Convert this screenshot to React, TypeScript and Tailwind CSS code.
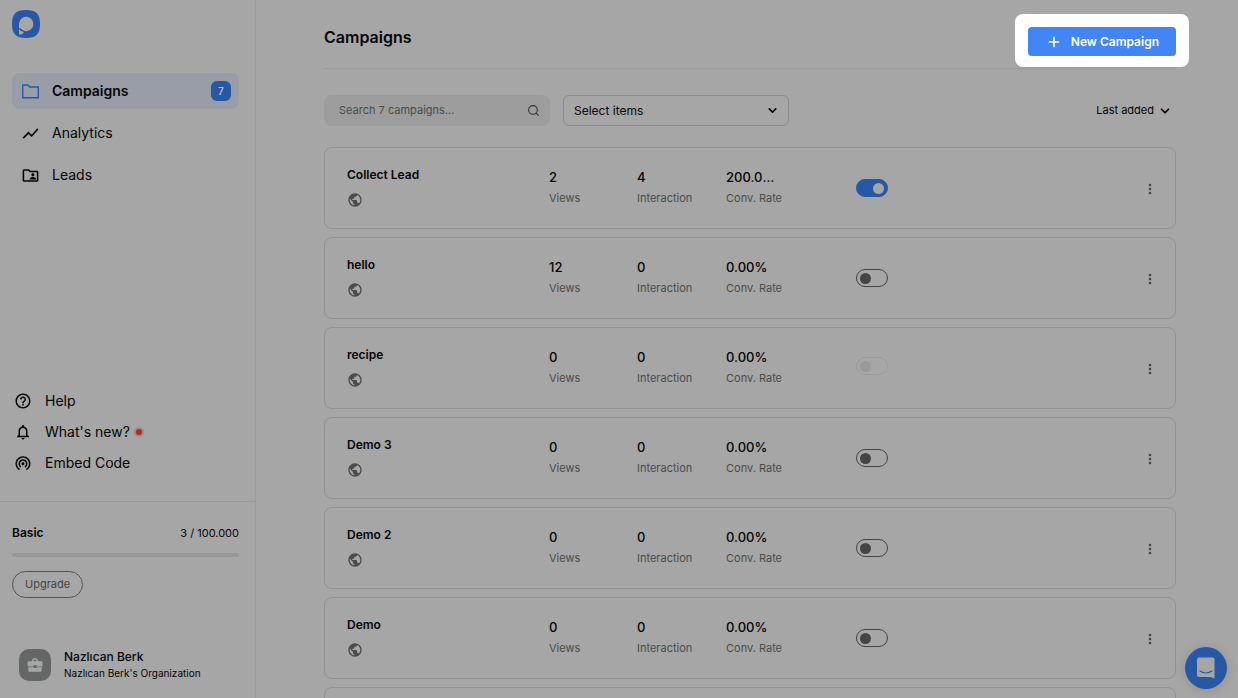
import { clsx } from 'clsx';
import { FiChevronDown, FiSearch } from 'react-icons/fi';
import {
  MdAdd,
  MdBusinessCenter,
  MdHelpOutline,
  MdMoreVert,
  MdNotificationsNone,
  MdOutlineFolderShared,
  MdPublic,
  MdShowChart,
  MdWifiTethering,
} from 'react-icons/md';

type Campaign = {
  name: string;
  views: string;
  interaction: string;
  rate: string;
  active?: boolean;
  disabled?: boolean;
};

const campaigns: Campaign[] = [
  { name: 'Collect Lead', views: '2', interaction: '4', rate: '200.00%', active: true },
  { name: 'hello', views: '12', interaction: '0', rate: '0.00%' },
  { name: 'recipe', views: '0', interaction: '0', rate: '0.00%', disabled: true },
  { name: 'Demo 3', views: '0', interaction: '0', rate: '0.00%' },
  { name: 'Demo 2', views: '0', interaction: '0', rate: '0.00%' },
  { name: 'Demo', views: '0', interaction: '0', rate: '0.00%' },
  { name: 'Demo 1', views: '0', interaction: '0', rate: '0.00%' },
];

function Logo() {
  return (
    <svg viewBox="0 0 28 28" className="size-7" aria-label="Home">
      <path d="M14 0C24 0 28 4 28 14S24 28 14 28 0 24 0 14 4 0 14 0Z" fill="#2857a3" />
      <path d="M7 14a7.200 7.200 0 1 1 7.200 7.200c-1.800 0-3.500-.8-5.200-2.400L7 18Z" fill="#a6a6a6" />
      <path d="M7 19.200c1.400 1.300 2.900 2.200 4.700 2.700-.1 1.500-1.200 2.500-2.600 2.500H7Z" fill="#a6a6a6" />
    </svg>
  );
}

function FolderIcon() {
  return (
    <svg viewBox="0 0 19 19" className="size-[19px] text-[#2857a3]" fill="none" stroke="currentColor" strokeWidth="1.400">
      <path d="M1.700 3h5.200l2 2h8.400v10.800H1.700Z" strokeLinejoin="round" />
    </svg>
  );
}

function Sidebar() {
  return (
    <aside className="flex h-full w-64 shrink-0 flex-col border-r border-[#9c9c9c]">
      <div className="px-3 pt-[10px]">
        <Logo />
      </div>

      {/* Main navigation */}
      <nav className="mt-[35px] flex flex-col gap-[6px] pr-4 pl-3 text-sm">
        <a href="#campaigns" className="flex h-9 items-center gap-3 rounded-lg bg-[#989da6] pr-2 pl-[9px] font-semibold">
          <FolderIcon />
          <span className="flex-1">Campaigns</span>
          <span className="flex size-5 items-center justify-center rounded-md bg-[#2857a3] text-[10px] text-[#b5bfd0]">7</span>
        </a>
        <a href="#analytics" className="flex h-9 items-center gap-3 pl-[9px]">
          <MdShowChart className="size-[19px]" />
          Analytics
        </a>
        <a href="#leads" className="flex h-9 items-center gap-3 pl-[9px]">
          <MdOutlineFolderShared className="size-[19px]" />
          Leads
        </a>
      </nav>

      {/* Secondary links */}
      <nav className="mt-auto flex flex-col gap-[11px] pb-7 pl-[14px] text-sm">
        <a href="#help" className="flex items-center gap-[13px]">
          <MdHelpOutline className="size-[18px]" />
          Help
        </a>
        <a href="#news" className="flex items-center gap-[13px]">
          <MdNotificationsNone className="size-[18px]" />
          <span className="flex items-center gap-1">
            What&apos;s new?
            <span className="flex size-[10px] items-center justify-center rounded-full bg-[#b08381]">
              <span className="size-[6px] rounded-full bg-[#a32f2c]" />
            </span>
          </span>
        </a>
        <a href="#embed" className="flex items-center gap-[13px]">
          <MdWifiTethering className="size-[18px]" />
          Embed Code
        </a>
      </nav>

      {/* Plan usage */}
      <section className="border-t border-[#999] pt-[22px] pr-4 pl-3">
        <div className="flex items-center justify-between">
          <h2 className="text-xs leading-[18px] font-semibold">Basic</h2>
          <span className="text-[11px] leading-[18px]">3 / 100.000</span>
        </div>
        <div className="mt-[11px] h-1 rounded-full bg-[#979797]" />
        <button className="mt-[14px] h-[27px] rounded-full border border-[#555] px-3 text-[11px] text-[#444]">Upgrade</button>
      </section>

      {/* Account */}
      <div className="mt-[50px] flex items-center gap-[13px] pb-4 pl-[19px]">
        <span className="flex size-8 items-center justify-center rounded-[10px] bg-[#646766]">
          <MdBusinessCenter className="size-[18px] text-[#a6a6a6]" />
        </span>
        <div>
          <p className="text-xs leading-[17px] font-medium">Nazlıcan Berk</p>
          <p className="text-[10px] leading-[17px]">Nazlıcan Berk&apos;s Organization</p>
        </div>
      </div>
    </aside>
  );
}

function Stat({ value, label }: { value: string; label: string }) {
  return (
    <div className="pb-1">
      <p className="w-[52px] truncate text-[13px] leading-5 font-medium">{value}</p>
      <p className="mt-[3px] text-[11px] leading-4 text-[#4b4b4b]">{label}</p>
    </div>
  );
}

function CampaignCard({ campaign }: { campaign: Campaign }) {
  const { name, views, interaction, rate, active, disabled } = campaign;

  return (
    <li className="grid h-[82px] shrink-0 grid-cols-[202px_88px_89px_130px_1fr_auto] items-center rounded-lg border border-[#929292] pr-[17px] pl-[22px]">
      <div className="pb-[2px]">
        <h3 className="text-xs leading-4 font-semibold">{name}</h3>
        <MdPublic className="mt-[9px] size-4 text-[#4b4b4b]" />
      </div>
      <Stat value={views} label="Views" />
      <Stat value={interaction} label="Interaction" />
      <Stat value={rate} label="Conv. Rate" />
      <input
        type="checkbox"
        role="switch"
        aria-label={`${name} active`}
        defaultChecked={active}
        disabled={disabled}
        className={clsx(
          'flex h-[18px] w-8 appearance-none items-center rounded-full border border-[#444] px-[3px]',
          "before:size-[11px] before:rounded-full before:bg-[#444] before:content-['']",
          'checked:justify-end checked:border-[#2857a3] checked:bg-[#2857a3] checked:before:bg-[#a6a6a6]',
          'disabled:mb-1 disabled:border-[#9c9c9c] disabled:before:bg-[#999a9c]'
        )}
      />
      <button aria-label={`${name} options`} className="pt-[2px] text-[#444]">
        <MdMoreVert className="size-4" />
      </button>
    </li>
  );
}

export default function App() {
  return (
    <div className="flex h-screen overflow-hidden bg-[#a6a6a6] font-['Inter',sans-serif] text-[#050505]">
      <Sidebar />

      <main className="min-w-0 flex-1 pr-[62px] pl-[68px]">
        <header className="flex h-[69px] items-start justify-between border-b border-[#9c9c9c] pt-[14px]">
          <h1 className="pt-[11px] text-base leading-6 font-semibold">Campaigns</h1>
          {/* White frame highlights the button */}
          <div className="-mr-[13px] rounded-lg bg-white px-[13px] pt-[13px] pb-[11px]">
            <button className="flex h-[29px] items-center gap-2 rounded bg-[#4285f4] px-[17px] text-xs font-semibold text-white">
              <MdAdd className="size-[18px]" />
              New Campaign
            </button>
          </div>
        </header>

        {/* Filters */}
        <div className="mt-[26px] flex items-center gap-[13px]">
          <div className="flex h-[31px] w-[226px] items-center rounded-lg bg-[#9d9d9d] pr-[10px] pl-[15px]">
            <input
              type="search"
              aria-label="Search campaigns"
              placeholder="Search 7 campaigns..."
              className="min-w-0 flex-1 text-[11px] outline-none placeholder:text-[#4b4b4b]"
            />
            <FiSearch className="size-[13px] text-[#333]" />
          </div>
          <div className="relative">
            <select aria-label="Filter items" className="h-[31px] w-[226px] appearance-none rounded-md border border-[#8c8c8c] px-[10px] text-xs">
              <option>Select items</option>
            </select>
            <FiChevronDown strokeWidth={3} className="pointer-events-none absolute top-[9px] right-[10px] size-[13px]" />
          </div>
          <button className="ml-auto flex items-center gap-1 pr-1 text-[11px]">
            Last added
            <FiChevronDown strokeWidth={3} className="size-[14px]" />
          </button>
        </div>

        <ul className="mt-[21px] flex flex-col gap-2">
          {campaigns.map((campaign) => (
            <CampaignCard key={campaign.name} campaign={campaign} />
          ))}
        </ul>
      </main>

      {/* Chat launcher */}
      <button
        aria-label="Open chat"
        className="fixed right-[11px] bottom-[9px] flex size-[42px] items-center justify-center rounded-full bg-[#2857a3] shadow-[0_1px_12px_rgba(0,0,0,0.12)]"
      >
        <svg viewBox="0 0 20 22" className="h-[22px] w-5">
          <path d="M3 0.500h13.500a2 2 0 0 1 2 2V21.500l-4-1.500H3a2 2 0 0 1-2-2V2.500a2 2 0 0 1 2-2Z" fill="#a6a6a6" />
          <path d="M4 14c3.500 2.600 8.300 2.600 11.800 0" fill="none" stroke="#2857a3" strokeWidth="1.300" strokeLinecap="round" />
        </svg>
      </button>
    </div>
  );
}
